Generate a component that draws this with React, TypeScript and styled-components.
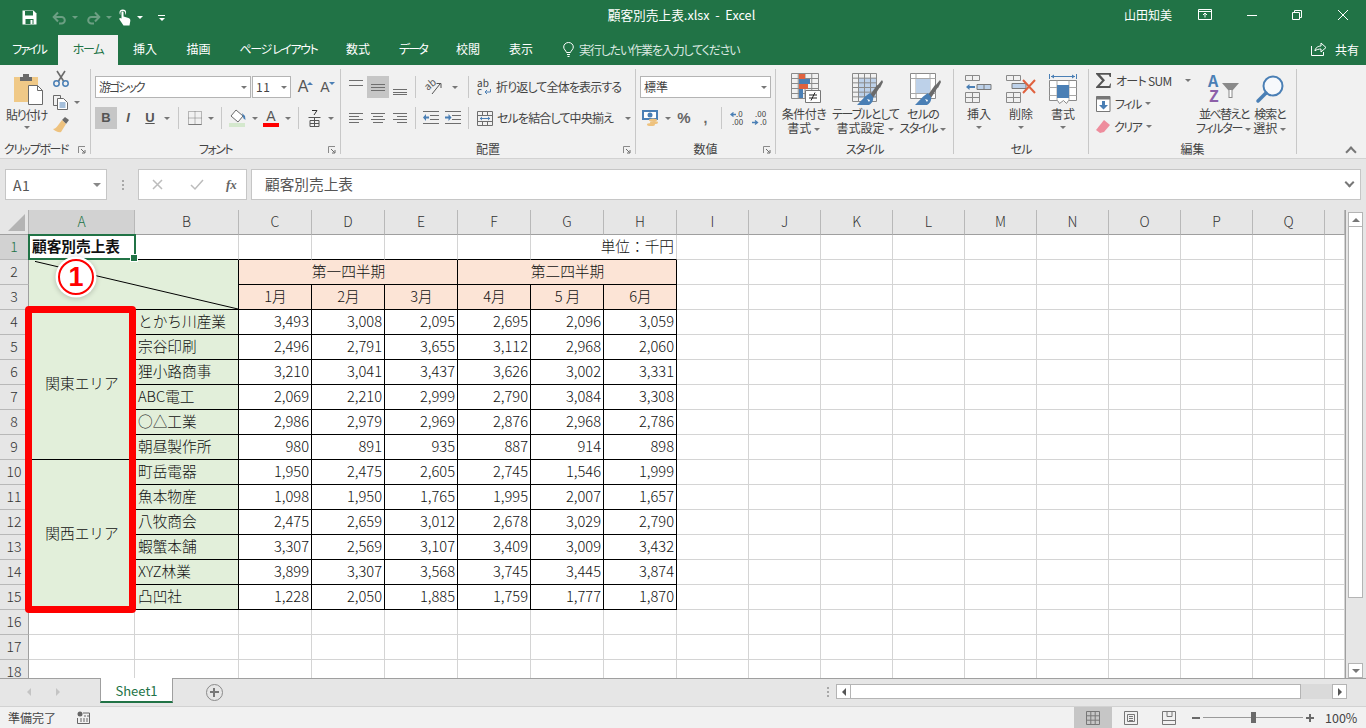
import React, { ReactNode } from 'react';
import styled, { createGlobalStyle } from 'styled-components';

const GlobalStyle = createGlobalStyle`
  html, body {
    margin: 0;
    padding: 0;
    overflow: hidden;
    background: #f1f1f1;
    font-family: "Noto Sans CJK JP", "Noto Sans", sans-serif;
  }
  * {
    box-sizing: border-box;
  }
`;

const GREEN = '#217346';
const GRAY = '#6a6a6a';
const BLUE = '#4a7fb5';

const Svg = styled.svg`
  display: block;
  flex: none;
  overflow: visible;
`;

// ---------- icons ----------

function SaveIcon() {
  return (
    <Svg width="15" height="15" viewBox="0 0 15 15">
      <path d="M0.5 0.5h11l3 3v11h-14z" fill="#fff" />
      <path d="M3 1h8v4.5H3zM3.5 9h8v5h-8z" fill={GREEN} />
      <path d="M8.5 10h2v4h-2z" fill="#fff" />
    </Svg>
  );
}

function UndoIcon({ flip }: { flip?: boolean }) {
  return (
    <Svg width="15" height="14" viewBox="0 0 15 14" style={flip ? { transform: 'scaleX(-1)' } : undefined}>
      <path d="M2 6h7.500a3.300 3.300 0 0 1 0 6.600H7M6 1.500L1.700 6 6 10.500" fill="none" stroke="#6c9f83" strokeWidth="2" />
    </Svg>
  );
}

function TouchIcon() {
  return (
    <Svg width="14" height="17" viewBox="0 0 14 17">
      <path d="M1.500 3.800a3.300 3.300 0 0 1 6.600 0c0 1-.3 1.700-.8 2.300V4a2.400 1.900 0 0 0-5 0v2.100c-.5-.6-.8-1.300-.8-2.300z" fill="#fff" />
      <path d="M3.500 3.500c0-1.200 2-1.200 2 0v4l5 1.500c1.500.5 2 1.500 1.800 3L11.500 16.500H5.500L1.500 10.500c-.8-1.300.8-2.200 2-1z" fill="#fff" />
    </Svg>
  );
}

function PasteIcon() {
  return (
    <Svg width="30" height="30" viewBox="0 0 30 30">
      <path d="M0 3h24v25H0z" fill="#f0c987" />
      <path d="M6 3h3V0h6v3h3v4H6z" fill={GRAY} />
      <path d="M14.500 11.500h9l5 5v14h-14z" fill="#fff" stroke={GRAY} />
      <path d="M23.500 11.500v5h5" fill="none" stroke={GRAY} />
    </Svg>
  );
}

function ScissorsIcon() {
  return (
    <Svg width="16" height="16" viewBox="0 0 16 16">
      <path d="M4 0l6.500 10M12 0L5.500 10" stroke={GRAY} strokeWidth="1.600" fill="none" />
      <circle cx="3.500" cy="12.500" r="2.700" fill="none" stroke={BLUE} strokeWidth="1.500" />
      <circle cx="12.500" cy="12.500" r="2.700" fill="none" stroke={BLUE} strokeWidth="1.500" />
    </Svg>
  );
}

function CopyIcon() {
  return (
    <Svg width="15" height="15" viewBox="0 0 15 15">
      <path d="M.5.500h7l0 3M.5.500v10h4" fill="none" stroke={GRAY} />
      <path d="M4.500 3.500h6l4 4v7h-10z" fill="#fff" stroke={GRAY} />
      <path d="M6.500 8h6M6.500 10h6M6.500 12h6" stroke={BLUE} />
    </Svg>
  );
}

function BrushIcon() {
  return (
    <Svg width="16" height="16" viewBox="0 0 16 16">
      <path d="M9 3l3-3 4 3-3 4z" fill={GRAY} />
      <path d="M9 3l4 4-5 8c-2 1-6-1-8-3 3 0 6-5 9-9z" fill="#eec27e" />
    </Svg>
  );
}

function BorderIcon() {
  return (
    <Svg width="14" height="14" viewBox="0 0 14 14">
      <path d="M.5.500h13v13H.5zM7 .5v13M.5 7h13" fill="none" stroke="#7a7a7a" strokeDasharray="1 1" />
      <path d="M.5 13.500h13" stroke="#7a7a7a" />
    </Svg>
  );
}

function FillIcon() {
  return (
    <Svg width="18" height="18" viewBox="0 0 18 18">
      <path d="M7 1l7 6-5 6-7-6z" fill="#fff" stroke={GRAY} />
      <path d="M13 4l3 3 .5 4-2-1.500z" fill={BLUE} />
      <path d="M0 14h16v4H0z" fill="#d4e8cd" />
    </Svg>
  );
}

function RubyIcon() {
  return (
    <Svg width="14" height="17" viewBox="0 0 14 17">
      <path d="M4 .5h5M9 .5L6 5" stroke="#333" fill="none" />
      <path d="M.5 7.500h12M2 10.500h9v6H2zM6.500 7.500v9M2 13.500h9" stroke="#555" fill="none" />
    </Svg>
  );
}

function AlignLines({ widths, rows, align }: { widths: number[]; rows: number[]; align: 'l' | 'c' | 'r' }) {
  const full = Math.max(...widths);
  return (
    <Svg width={full} height="15" viewBox={`0 0 ${full} 15`}>
      {rows.map((y, i) => {
        const w = widths[i % widths.length];
        const x = align === 'l' ? 0 : align === 'c' ? (full - w) / 2 : full - w;
        return <rect key={y} x={x} y={y} width={w} height="1" fill="#6e6e6e" />;
      })}
    </Svg>
  );
}

function OrientIcon() {
  return (
    <Svg width="18" height="18" viewBox="0 0 18 18">
      <text x="0" y="10" fontSize="10" fill="#555" transform="rotate(-40 5 9)">ab</text>
      <path d="M6 16L14 6M10.500 5.500H15V10" fill="none" stroke="#555" />
    </Svg>
  );
}

function IndentIcon({ flip }: { flip?: boolean }) {
  return (
    <Svg width="16" height="14" viewBox="0 0 16 14">
      <path d="M0 .5h16M7 4.500h9M7 8.500h9M0 12.500h16" stroke="#6e6e6e" />
      {flip ? (
        <path d="M0 5.500h3.500V3L6.500 6.500 3.500 10V7.500H0z" fill={BLUE} />
      ) : (
        <path d="M6 5.500H3V3L0 6.500 3 10V7.500h3z" fill={BLUE} />
      )}
    </Svg>
  );
}

function WrapIcon() {
  return (
    <Svg width="15" height="17" viewBox="0 0 15 17">
      <text x="0" y="8" fontSize="10" fill="#444">ab</text>
      <text x="0" y="16" fontSize="10" fill="#444">c</text>
      <path d="M13.500 10v3H8M10 11l-2 2 2 2" fill="none" stroke={BLUE} />
    </Svg>
  );
}

function MergeIcon() {
  return (
    <Svg width="16" height="15" viewBox="0 0 16 15">
      <path d="M.5.500h15v14H.5zM.5 4.500h15M.5 10.500h15M5.500.5v4M10.500.5v4M5.500 10.500v4M10.500 10.500v4" fill="none" stroke="#6e6e6e" />
      <path d="M3 7.500h10" stroke={BLUE} />
      <path d="M3 7.500l2-2v4zM13 7.500l-2-2v4z" fill={BLUE} />
    </Svg>
  );
}

function CurrencyIcon() {
  return (
    <Svg width="18" height="16" viewBox="0 0 18 16">
      <path d="M0 0h16v10H0z" fill={BLUE} />
      <path d="M2 2h12v6H2z" fill="#fff" />
      <circle cx="8" cy="5" r="2.500" fill={BLUE} />
      <ellipse cx="11" cy="10" rx="4" ry="1.500" fill="#eec27e" />
      <ellipse cx="12" cy="12.500" rx="4" ry="1.500" fill="#eec27e" />
      <ellipse cx="9" cy="14.500" rx="4" ry="1.500" fill="#eec27e" />
    </Svg>
  );
}

function DecimalIcon({ more }: { more?: boolean }) {
  return (
    <Svg width="16" height="15" viewBox="0 0 16 15">
      <text x={more ? 3 : 6} y="6" fontSize="8" fill="#444">{more ? '.00' : '.0'}</text>
      <text x={more ? 8 : 2} y="14" fontSize="8" fill="#444">{more ? '.0' : '.00'}</text>
      {more ? (
        <path d="M0 11.500h5M3 9.500l2.500 2-2.500 2" stroke={BLUE} fill="none" strokeWidth="1.300" />
      ) : (
        <path d="M6 3.500H1M3.500 1.500L1 3.500l2.500 2" stroke={BLUE} fill="none" strokeWidth="1.300" />
      )}
    </Svg>
  );
}

function TableLines({ x, y, w, h, cols, rows }: { x: number; y: number; w: number; h: number; cols: number; rows: number }) {
  const cw = w / cols;
  const rh = h / rows;
  let d = `M${x + 0.5} ${y + 0.5}h${w}v${h}h${-w}z`;
  for (let i = 1; i < cols; i++) d += `M${x + 0.5 + i * cw} ${y + 0.5}v${h}`;
  for (let i = 1; i < rows; i++) d += `M${x + 0.5} ${y + 0.5 + i * rh}h${w}`;
  return <path d={d} fill="none" stroke="#8a8a8a" />;
}

function CondFormatIcon() {
  return (
    <Svg width="32" height="32" viewBox="0 0 32 32">
      <TableLines x={0} y={0} w={27} h={25} cols={4} rows={5} />
      <path d="M8 1h6v5H8z" fill="#e0623f" />
      <path d="M8 6h11v5H8z" fill={BLUE} />
      <path d="M8 11h9v5H8z" fill="#e0623f" />
      <path d="M8 16h4v9H8z" fill={BLUE} />
      <path d="M14.500 17.500h15v12h-15z" fill="#fff" stroke="#777" />
      <path d="M18 22h8M18 25h8M24 19.500l-4 8" stroke="#222" fill="none" />
    </Svg>
  );
}

function BrushDiag() {
  return (
    <g transform="translate(-6 0)">
      <path d="M24 22l7-10 3 2-7 11z" fill={GRAY} />
      <path d="M36 7l-5 6 3 2 3-6z" fill={GRAY} />
      <path d="M24 20c-4 2-9 8-13 12h12c2-1 5-4 4-8z" fill={BLUE} />
      <path d="M21 26l3 1-1 2z" fill="#fff" />
    </g>
  );
}

function TableFormatIcon() {
  return (
    <Svg width="32" height="32" viewBox="0 0 32 32">
      <path d="M7 5h17v20H7z" fill="#bdd1e9" />
      <TableLines x={0} y={0} w={24} h={28} cols={4} rows={6} />
      <BrushDiag />
    </Svg>
  );
}

function CellStyleIcon() {
  return (
    <Svg width="32" height="32" viewBox="0 0 32 32">
      <path d="M.5.500h25v25H.5z" fill="#fff" stroke="#8a8a8a" />
      <path d="M.5 5.500h25M.5 20.500h25M6 .5v25M20 .5v25" stroke="#a8a8a8" />
      <path d="M6 6h14v14H6z" fill="#bdd1e9" />
      <BrushDiag />
    </Svg>
  );
}

function CellInsertIcon() {
  return (
    <Svg width="28" height="28" viewBox="0 0 28 28">
      <TableLines x={0} y={0} w={14} h={5} cols={2} rows={1} />
      <TableLines x={0} y={17} w={14} h={10} cols={2} rows={2} />
      <path d="M12 9.500h14v5H12z" fill="#bdd1e9" stroke="#7a7a7a" />
      <path d="M19 9.500v5" stroke="#7a7a7a" />
      <path d="M10 11H4.500V9L1 12l3.500 3v-2H10z" fill={BLUE} />
    </Svg>
  );
}

function CellDeleteIcon() {
  return (
    <Svg width="30" height="28" viewBox="0 0 30 28">
      <TableLines x={0} y={0} w={14} h={5} cols={2} rows={1} />
      <TableLines x={0} y={17} w={14} h={10} cols={2} rows={2} />
      <path d="M6 8.500h14v5H6z" fill="#bdd1e9" stroke="#7a7a7a" />
      <path d="M17 5l12 13M29 5L17 18" stroke="#e0623f" strokeWidth="2" />
    </Svg>
  );
}

function CellFormatIcon() {
  return (
    <Svg width="28" height="32" viewBox="0 0 28 32">
      <path d="M.5 1v5M27.500 1v5M2 3.500h24" stroke={BLUE} fill="none" />
      <path d="M2 3.500l3-2v4zM26 3.500l-3-2v4z" fill={BLUE} />
      <path d="M.5 7.500h27v20l-8 0-2 3-3-3-4 3-2-3H.5z" fill="#fff" stroke="#8a8a8a" />
      <path d="M.5 14.500h27M.5 22.500h27M8 7.500v20M20 7.500v20" stroke="#a8a8a8" />
      <path d="M8 12h12v13H8z" fill={BLUE} />
    </Svg>
  );
}

function SigmaIcon() {
  return (
    <Svg width="16" height="15" viewBox="0 0 16 15">
      <path d="M0 0h15v4h-1.200l-1-2.300H4l5 5.500-5.300 5.800h9.500l1-2.500H15L14.500 15H0v-1l6-6.500L0 1z" fill="#555" />
    </Svg>
  );
}

function FillDownIcon() {
  return (
    <Svg width="15" height="16" viewBox="0 0 15 16">
      <path d="M.5 .5h13.500v15H.5z" fill="#fff" stroke="#777" />
      <path d="M.5 .5h13.500v3H.5z" fill="#777" />
      <path d="M6 5h3v4h3l-4.500 4.500L3 9h3z" fill={BLUE} />
    </Svg>
  );
}

function EraserIcon() {
  return (
    <Svg width="14" height="13" viewBox="0 0 14 13">
      <path d="M8 0l6 5-6 7-4 1-4-3z" fill="#ee8d9d" />
    </Svg>
  );
}

function SortIcon() {
  return (
    <Svg width="30" height="30" viewBox="0 0 30 30">
      <text x="-1" y="13" fontSize="16" fontWeight="700" fill={BLUE}>A</text>
      <text x="0" y="28" fontSize="16" fontWeight="700" fill="#8c5fa8">Z</text>
      <path d="M13 9h17l-6.500 7.500V24h-4v-7.500z" fill="#8a8a8a" />
      <path d="M20.500 16h2v7h-2z" fill="#fff" />
    </Svg>
  );
}

function SearchIcon() {
  return (
    <Svg width="28" height="28" viewBox="0 0 28 28">
      <circle cx="17" cy="11" r="9.500" fill="#f7f9fc" stroke={BLUE} strokeWidth="2" />
      <path d="M10 18L2 26" stroke={BLUE} strokeWidth="3.500" strokeLinecap="round" />
    </Svg>
  );
}

function BulbIcon() {
  return (
    <Svg width="11" height="15" viewBox="0 0 11 15">
      <path d="M3.500 10.500C3 8.500 .7 7.500.7 5a4.800 4.500 0 0 1 9.600 0c0 2.500-2.300 3.500-2.800 5.500z" fill="none" stroke="#fff" />
      <path d="M4 12.500h3M4.500 14.500h2" stroke="#fff" />
    </Svg>
  );
}

function ShareIcon() {
  return (
    <Svg width="16" height="14" viewBox="0 0 16 14">
      <path d="M.5 4v9.500h12V10M4 9c0-3 3-5 6-5V1l5 4.500L10 10V7C8 7 5 7.500 4 9z" fill="none" stroke="#fff" />
    </Svg>
  );
}

function LauncherIcon() {
  return (
    <Svg width="8" height="8" viewBox="0 0 8 8">
      <path d="M.5 7V.5H7" fill="none" stroke="#8a8a8a" />
      <path d="M3 3l3.500 3.500M7 4v3H4" fill="none" stroke="#6a6a6a" />
    </Svg>
  );
}

// ---------- title bar and tabs ----------

const Window = styled.div`
  width: 1366px;
  height: 728px;
  display: flex;
  flex-direction: column;
  overflow: hidden;
  background: #e6e6e6;
`;

const TitleBar = styled.header`
  height: 35px;
  flex: none;
  display: grid;
  grid-template-columns: 1fr auto 1fr;
  align-items: center;
  background: ${GREEN};
  color: #fff;
  font-size: 12px;
`;

const QuickAccess = styled.div`
  display: flex;
  align-items: center;
  padding-left: 22px;
`;

const QuickItem = styled.span<{ $w: number }>`
  width: ${(p) => p.$w}px;
  display: flex;
  align-items: center;
`;

const WhiteCaret = styled.span<{ $dim?: boolean }>`
  width: 0;
  height: 0;
  border-left: 3.5px solid transparent;
  border-right: 3.5px solid transparent;
  border-top: 3.5px solid ${(p) => (p.$dim ? '#6c9f83' : '#fff')};
`;

const CustomizeMark = styled.span`
  width: 7px;
  height: 7px;
  border-top: 1px solid #fff;
  display: flex;
  justify-content: center;
  margin-top: 2px;
  &::after {
    content: '';
    margin-top: 2px;
    border-left: 3.5px solid transparent;
    border-right: 3.5px solid transparent;
    border-top: 3.5px solid #fff;
  }
`;

const DocTitle = styled.div`
  font-size: 12.7px;
  white-space: pre;
  padding: 0 3px 6px 0;
`;

const WindowControls = styled.div`
  display: flex;
  align-items: center;
  justify-content: flex-end;
  padding: 0 18px 6px 0;
`;

const UserName = styled.span`
  font-size: 12px;
  margin-right: 26px;
`;

const ControlSlot = styled.span<{ $w: number }>`
  width: ${(p) => p.$w}px;
  display: flex;
`;

const TabBar = styled.nav`
  height: 30px;
  flex: none;
  display: flex;
  align-items: stretch;
  background: ${GREEN};
  color: #fff;
  font-size: 12px;
  font-feature-settings: 'palt';
`;

const Tab = styled.div<{ $w: number; $ls?: number; $active?: boolean }>`
  width: ${(p) => p.$w}px;
  display: flex;
  align-items: center;
  justify-content: center;
  padding-bottom: 3px;
  letter-spacing: ${(p) => p.$ls ?? 0}px;
  background: ${(p) => (p.$active ? '#f1f1f1' : 'transparent')};
  color: ${(p) => (p.$active ? GREEN : '#fff')};
`;

const TellMe = styled.div`
  display: flex;
  align-items: center;
  gap: 5px;
  padding: 0 0 2px 15px;
  color: #dce9e1;
  letter-spacing: -1.150px;
`;

const ShareBox = styled.div`
  margin-left: auto;
  display: flex;
  align-items: center;
  gap: 8px;
  padding: 0 7px 2px 0;
`;

// ---------- ribbon ----------

const Ribbon = styled.div`
  height: 94px;
  flex: none;
  display: flex;
  padding-top: 4px;
  background: #f1f1f1;
  border-bottom: 1px solid #d2d2d2;
  color: #444;
  font-size: 12px;
  font-feature-settings: 'palt';
  line-height: 14px;
`;

const Squeeze = styled.span<{ $ls: number }>`
  letter-spacing: ${(p) => p.$ls}px;
  white-space: nowrap;
`;

const Group = styled.section<{ $w: number }>`
  width: ${(p) => p.$w}px;
  height: 85px;
  flex: none;
  display: grid;
  grid-template-rows: 72px 16px;
  border-right: 1px solid #c8c8c8;
  position: relative;
`;

const GroupLabel = styled.div<{ $ls: number; $shift: number }>`
  text-align: center;
  line-height: 16px;
  color: #444;
  letter-spacing: ${(p) => p.$ls}px;
  padding-right: ${(p) => p.$shift}px;
`;

const Launcher = styled.span`
  position: absolute;
  right: 4px;
  bottom: 0;
`;

const Stack = styled.div<{ $pad: number }>`
  display: flex;
  flex-direction: column;
  gap: 9px;
  padding: 7px 0 0 ${(p) => p.$pad}px;
`;

const Row = styled.div`
  height: 22px;
  display: flex;
  align-items: center;
`;

const Tool = styled.span<{ $w: number; $on?: boolean }>`
  width: ${(p) => p.$w}px;
  height: 22px;
  flex: none;
  display: flex;
  align-items: center;
  justify-content: center;
  background: ${(p) => (p.$on ? '#c6c6c6' : 'transparent')};
`;

const Caret = styled.span<{ $w?: number }>`
  width: ${(p) => p.$w ?? 7}px;
  flex: none;
  display: inline-flex;
  justify-content: center;
  vertical-align: middle;
  &::after {
    content: '';
    border-left: 3.5px solid transparent;
    border-right: 3.5px solid transparent;
    border-top: 3.5px solid #777;
  }
`;

const Sep = styled.span<{ $m?: number }>`
  width: 1px;
  height: 22px;
  flex: none;
  margin: 0 ${(p) => p.$m ?? 5}px;
  background: #c8c8c8;
`;

const SelectBox = styled.div<{ $w: number; $gapLeft?: number }>`
  width: ${(p) => p.$w}px;
  height: 22px;
  flex: none;
  display: flex;
  align-items: center;
  justify-content: space-between;
  margin-left: ${(p) => p.$gapLeft ?? 0}px;
  padding: 0 3px;
  background: #fff;
  border: 1px solid #b4b4b4;
  color: #444;
`;

const SizeRow = styled.div`
  display: flex;
  margin-left: 1px;
`;

const SizeUp = styled.span<{ $shrink?: boolean }>`
  position: relative;
  font-size: ${(p) => (p.$shrink ? 14 : 16)}px;
  color: #555;
  font-family: "Liberation Sans", sans-serif;
  &::after {
    content: '';
    position: absolute;
    top: 2px;
    right: -5px;
    border-left: 3px solid transparent;
    border-right: 3px solid transparent;
    ${(p) => (p.$shrink ? `border-top: 3px solid ${BLUE};` : `border-bottom: 3px solid ${BLUE};`)}
  }
`;

const FormatLetter = styled.span<{ $italic?: boolean; $under?: boolean }>`
  font-family: "Liberation Sans", sans-serif;
  font-size: 13px;
  font-weight: 700;
  color: #555;
  font-style: ${(p) => (p.$italic ? 'italic' : 'normal')};
  text-decoration: ${(p) => (p.$under ? 'underline' : 'none')};
`;

const ColorLetter = styled.span`
  display: flex;
  flex-direction: column;
  align-items: center;
  font-family: "Liberation Sans", sans-serif;
  font-size: 14px;
  line-height: 14px;
  color: #555;
  &::after {
    content: '';
    width: 16px;
    height: 4px;
    background: #ff0000;
  }
`;

const TextTool = styled.div<{ $w: number; $gap: number }>`
  width: ${(p) => p.$w}px;
  display: flex;
  align-items: center;
  gap: ${(p) => p.$gap}px;
  padding-left: 4px;
  white-space: nowrap;
`;

const NumberMark = styled.span<{ $size: number }>`
  font-family: "Liberation Sans", sans-serif;
  font-size: ${(p) => p.$size}px;
  font-weight: 700;
  color: #666;
`;

const ClipGrid = styled.div`
  display: grid;
  grid-template-columns: 53px 1fr;
`;

const PasteButton = styled.div`
  display: flex;
  flex-direction: column;
  align-items: center;
  padding-top: 5px;
  gap: 4px;
  white-space: nowrap;
`;

const PasteArt = styled.span`
  padding-left: 4px;
`;

const ClipColumn = styled.div`
  display: flex;
  flex-direction: column;
  gap: 7px;
  padding-top: 2px;
`;

const ClipItem = styled.div`
  display: flex;
  align-items: center;
  gap: 3px;
  height: 16px;
`;

const BigRow = styled.div<{ $pad?: number }>`
  display: flex;
  padding-left: ${(p) => p.$pad ?? 0}px;
`;

const BigButton = styled.div<{ $w: number }>`
  width: ${(p) => p.$w}px;
  flex: none;
  display: grid;
  grid-template-rows: 38px auto;
  justify-items: center;
  align-items: end;
`;

const BigIconSlot = styled.div<{ $shift?: number }>`
  height: 38px;
  display: flex;
  align-items: center;
  padding: 1px 0 0 ${(p) => p.$shift ?? 0}px;
`;

const BigText = styled.div`
  text-align: center;
  white-space: nowrap;
  line-height: 14px;
  align-self: start;
`;

const CaretBlock = styled.div`
  display: flex;
  justify-content: center;
  padding-top: 5px;
`;

const EditColumn = styled.div`
  width: 107px;
  flex: none;
  display: flex;
  flex-direction: column;
  padding-left: 7px;
`;

const EditItem = styled.div`
  height: 23px;
  display: flex;
  align-items: center;
  gap: 4px;
  white-space: nowrap;
`;

const Collapse = styled.span`
  align-self: flex-end;
  margin-left: auto;
  margin-right: 11px;
  margin-bottom: 2px;
  width: 8px;
  height: 8px;
  border-left: 2px solid #777;
  border-top: 2px solid #777;
  transform: rotate(45deg);
`;

// ---------- formula bar ----------

const FormulaBar = styled.div`
  height: 51px;
  flex: none;
  display: flex;
  align-items: flex-start;
  padding: 10px 5px 0;
  background: #e6e6e6;
  color: #555;
`;

const NameBox = styled.div`
  width: 102px;
  height: 31px;
  display: flex;
  align-items: center;
  justify-content: space-between;
  padding: 0 5px 0 7px;
  background: #fff;
  border: 1px solid #c6c6c6;
  font-size: 14px;
  letter-spacing: 0.5px;
`;

const GripDots = styled.span`
  width: 31px;
  height: 31px;
  flex: none;
  display: flex;
  flex-direction: column;
  align-items: center;
  justify-content: center;
  gap: 2px;
  & > i {
    width: 2px;
    height: 2px;
    background: #a8a8a8;
  }
`;

const FnBox = styled.div`
  width: 109px;
  height: 31px;
  flex: none;
  display: grid;
  grid-template-columns: 38px 36px 1fr;
  align-items: center;
  padding-left: 13px;
  background: #fff;
  border: 1px solid #c6c6c6;
`;

const FxMark = styled.span`
  font-family: "Liberation Serif", serif;
  font-style: italic;
  font-weight: 700;
  font-size: 13px;
  color: #666;
`;

const FormulaInput = styled.div`
  flex: 1;
  margin-left: 4px;
  height: 31px;
  display: flex;
  align-items: center;
  justify-content: space-between;
  padding: 0 5px 3px 13px;
  background: #fff;
  border: 1px solid #c6c6c6;
  font-size: 14.67px;
  color: #555;
`;

const ChevronDown = styled.span`
  width: 7px;
  height: 7px;
  margin: -1px 2px 0 0;
  border-right: 2px solid #777;
  border-bottom: 2px solid #777;
  transform: rotate(45deg);
`;

// ---------- sheet ----------

const SheetArea = styled.div`
  height: 468px;
  flex: none;
  display: flex;
  overflow: hidden;
`;

const GridClip = styled.div`
  width: 1346px;
  flex: none;
  overflow: hidden;
  border-right: 1px solid #9f9f9f;
`;

const Grid = styled.div`
  position: relative;
  display: grid;
  grid-template-columns: 29px 106px 104px repeat(6, 73px) repeat(9, 72px) 20px;
  grid-auto-rows: 25px;
  background: #fff;
  color: #111;
  font-size: 14.67px;
  font-weight: 300;
`;

const Corner = styled.div`
  background: #e6e6e6;
  border-right: 1px solid #b0b0b0;
  border-bottom: 1px solid #9f9f9f;
  display: flex;
  align-items: flex-end;
  justify-content: flex-end;
  padding: 0 3px 3px 0;
  &::after {
    content: '';
    border-left: 17px solid transparent;
    border-bottom: 17px solid #b4b4b4;
  }
`;

const ColHead = styled.div<{ $on?: boolean }>`
  display: flex;
  align-items: center;
  justify-content: center;
  padding-bottom: 2px;
  background: ${(p) => (p.$on ? '#d2d2d2' : '#e6e6e6')};
  color: ${(p) => (p.$on ? GREEN : '#333')};
  border-right: 1px solid #b8b8b8;
  border-bottom: 1px solid #9f9f9f;
  font-size: 14px;
`;

const RowHead = styled.div<{ $on?: boolean }>`
  display: flex;
  align-items: center;
  justify-content: center;
  padding-bottom: 3px;
  background: ${(p) => (p.$on ? '#d2d2d2' : '#e6e6e6')};
  color: ${(p) => (p.$on ? GREEN : '#333')};
  border-right: 1px solid #9f9f9f;
  border-bottom: 1px solid #b8b8b8;
  font-size: 14px;
`;

const Cell = styled.div<{
  $bg?: string;
  $black?: boolean;
  $under?: boolean;
  $cols?: number;
  $rows?: number;
  $align?: 'left' | 'center' | 'right';
  $bold?: boolean;
}>`
  grid-column: span ${(p) => p.$cols ?? 1};
  grid-row: span ${(p) => p.$rows ?? 1};
  display: flex;
  align-items: center;
  justify-content: ${(p) => (p.$align === 'center' ? 'center' : p.$align === 'right' ? 'flex-end' : 'flex-start')};
  padding: 0 2px 4px 3px;
  background: ${(p) => p.$bg ?? '#fff'};
  border-right: 1px solid ${(p) => (p.$black ? '#000' : '#d4d4d4')};
  border-bottom: 1px solid ${(p) => (p.$black || p.$under ? '#000' : '#d4d4d4')};
  font-weight: ${(p) => (p.$bold ? 700 : 300)};
  white-space: nowrap;
  position: relative;
  overflow: hidden;
`;

const Diagonal = styled.svg`
  position: absolute;
  inset: 0;
  width: 100%;
  height: 100%;
`;

const Selection = styled.div`
  position: absolute;
  left: 28px;
  top: 24px;
  width: 108px;
  height: 26px;
  border: 2px solid ${GREEN};
  pointer-events: none;
  &::after {
    content: '';
    position: absolute;
    right: -4px;
    bottom: -4px;
    width: 6px;
    height: 6px;
    background: ${GREEN};
    border: 1px solid #fff;
  }
`;

const RedFrame = styled.div`
  position: absolute;
  left: 25px;
  top: 96px;
  width: 111px;
  height: 307px;
  border: 7px solid #ff0000;
  border-radius: 4px;
`;

const StepBadge = styled.div`
  position: absolute;
  left: 58px;
  top: 49px;
  width: 36px;
  height: 36px;
  display: flex;
  align-items: center;
  justify-content: center;
  border-radius: 50%;
  background: #fff;
  border: 2px solid #ff0000;
  box-shadow: 0 0 0 2.5px #fff, 0 1px 5px 3px rgba(0, 0, 0, 0.18);
  color: #ff0000;
  font-family: "Liberation Sans", sans-serif;
  font-size: 27px;
  font-weight: 700;
`;

const VScroll = styled.div`
  flex: 1;
  display: flex;
  flex-direction: column;
  padding: 2px 3px 0 2px;
  background: #e6e6e6;
`;

const ScrollBtn = styled.div`
  flex: none;
  width: 15px;
  height: 15px;
  display: flex;
  align-items: center;
  justify-content: center;
  background: #fff;
  border: 1px solid #b4b4b4;
`;

const Tri = styled.span<{ $dir: 'up' | 'down' | 'left' | 'right'; $color?: string }>`
  width: 0;
  height: 0;
  ${(p) => {
    const c = p.$color ?? '#777';
    if (p.$dir === 'up') return `border-left:4px solid transparent;border-right:4px solid transparent;border-bottom:4px solid ${c};`;
    if (p.$dir === 'down') return `border-left:4px solid transparent;border-right:4px solid transparent;border-top:4px solid ${c};`;
    if (p.$dir === 'left') return `border-top:4px solid transparent;border-bottom:4px solid transparent;border-right:4px solid ${c};`;
    return `border-top:4px solid transparent;border-bottom:4px solid transparent;border-left:4px solid ${c};`;
  }}
`;

const VThumb = styled.div`
  width: 15px;
  height: 371px;
  flex: none;
  background: #fff;
  border: 1px solid #b4b4b4;
  border-top: 0;
`;

const VTrack = styled.div`
  flex: 1;
`;

// ---------- sheet tabs and status ----------

const SheetBar = styled.div`
  height: 28px;
  flex: none;
  display: flex;
  background: #e6e6e6;
  border-top: 1px solid #9f9f9f;
`;

const TabNav = styled.div`
  width: 100px;
  flex: none;
  display: flex;
  align-items: center;
  gap: 25px;
  padding: 0 0 2px 27px;
`;

const SheetTab = styled.div`
  width: 73px;
  height: 25px;
  margin-top: -1px;
  flex: none;
  display: flex;
  align-items: center;
  justify-content: center;
  padding-top: 2px;
  background: #fff;
  color: ${GREEN};
  font-size: 13px;
  border-left: 1px solid #9f9f9f;
  border-right: 1px solid #9f9f9f;
  border-bottom: 2px solid ${GREEN};
`;

const AddSheet = styled.div`
  width: 17px;
  height: 17px;
  margin: 5px 0 0 33px;
  flex: none;
  border-radius: 50%;
  border: 1.500px solid #8a8a8a;
  position: relative;
  &::before,
  &::after {
    content: '';
    position: absolute;
    background: #777;
  }
  &::before {
    left: 3px;
    right: 3px;
    top: 6px;
    height: 2px;
  }
  &::after {
    top: 3px;
    bottom: 3px;
    left: 6px;
    width: 2px;
  }
`;

const HScrollWrap = styled.div`
  margin-left: auto;
  display: flex;
  align-items: center;
  padding: 0 19px 2px 0;
`;

const GripH = styled(GripDots)`
  width: 16px;
  height: 16px;
`;

const HThumb = styled.div`
  width: 450px;
  height: 15px;
  flex: none;
  background: #fff;
  border: 1px solid #b4b4b4;
  border-left: 0;
`;

const HTrack = styled.div`
  width: 31px;
  height: 15px;
  flex: none;
  background: #dadada;
`;

const StatusBar = styled.footer`
  height: 22px;
  flex: none;
  display: flex;
  align-items: center;
  padding-left: 8px;
  background: #f1f1f1;
  border-top: 1px solid #d2d2d2;
  color: #444;
  font-size: 12px;
`;

const StatusIcon = styled.span`
  margin-left: 21px;
  display: flex;
`;

const ViewGroup = styled.div`
  margin-left: auto;
  height: 100%;
  display: flex;
  align-items: stretch;
`;

const ViewBtn = styled.span<{ $on?: boolean }>`
  width: 38px;
  display: flex;
  align-items: center;
  justify-content: center;
  background: ${(p) => (p.$on ? '#c6c6c6' : 'transparent')};
`;

const ZoomBox = styled.div`
  display: flex;
  align-items: center;
  padding-left: 4px;
  gap: 3px;
`;

const ZoomSign = styled.span`
  width: 8px;
  height: 8px;
  display: block;
  position: relative;
  &::before {
    content: '';
    position: absolute;
    left: 0;
    right: 0;
    top: 3px;
    height: 2px;
    background: #6a6a6a;
  }
`;

const ZoomPlus = styled(ZoomSign)`
  &::after {
    content: '';
    position: absolute;
    top: 0;
    bottom: 0;
    left: 3px;
    width: 2px;
    background: #6a6a6a;
  }
`;

const ZoomTrack = styled.div`
  width: 100px;
  height: 1px;
  background: #9a9a9a;
  position: relative;
`;

const ZoomThumb = styled.span`
  position: absolute;
  left: 48px;
  top: -5px;
  width: 5px;
  height: 11px;
  background: #6a6a6a;
`;

const ZoomValue = styled.span`
  width: 52px;
  padding-left: 11px;
  font-size: 12.5px;
  align-self: center;
`;

// ---------- data ----------

const columns = ['A', 'B', 'C', 'D', 'E', 'F', 'G', 'H', 'I', 'J', 'K', 'L', 'M', 'N', 'O', 'P', 'Q', ''];
const RIGHT_BLANKS = 10;
const GREEN_BG = '#e2efda';
const PEACH_BG = '#fce4d6';
const months = ['1月', '2月', '3月', '4月', '5 月', '6月'];

const customers: { r: number; name: string; v: string[] }[] = [
  { r: 4, name: 'とかち川産業', v: ['3,493', '3,008', '2,095', '2,695', '2,096', '3,059'] },
  { r: 5, name: '宗谷印刷', v: ['2,496', '2,791', '3,655', '3,112', '2,968', '2,060'] },
  { r: 6, name: '狸小路商事', v: ['3,210', '3,041', '3,437', '3,626', '3,002', '3,331'] },
  { r: 7, name: 'ABC電工', v: ['2,069', '2,210', '2,999', '2,790', '3,084', '3,308'] },
  { r: 8, name: '○△工業', v: ['2,986', '2,979', '2,969', '2,876', '2,968', '2,786'] },
  { r: 9, name: '朝昼製作所', v: ['980', '891', '935', '887', '914', '898'] },
  { r: 10, name: '町岳電器', v: ['1,950', '2,475', '2,605', '2,745', '1,546', '1,999'] },
  { r: 11, name: '魚本物産', v: ['1,098', '1,950', '1,765', '1,995', '2,007', '1,657'] },
  { r: 12, name: '八牧商会', v: ['2,475', '2,659', '3,012', '2,678', '3,029', '2,790'] },
  { r: 13, name: '蝦蟹本舗', v: ['3,307', '2,569', '3,107', '3,409', '3,009', '3,432'] },
  { r: 14, name: 'XYZ林業', v: ['3,899', '3,307', '3,568', '3,745', '3,445', '3,874'] },
  { r: 15, name: '凸凹社', v: ['1,228', '2,050', '1,885', '1,759', '1,777', '1,870'] },
];

const tabs = [
  { name: 'ファイル', w: 58, ls: -2 },
  { name: 'ホーム', w: 60, ls: -1.200, active: true },
  { name: '挿入', w: 54 },
  { name: '描画', w: 53 },
  { name: 'ページ レイアウト', w: 107, ls: -1.400 },
  { name: '数式', w: 52 },
  { name: 'データ', w: 58, ls: -1.700 },
  { name: '校閲', w: 52 },
  { name: '表示', w: 54 },
];

function Blanks({ count }: { count: number }) {
  return (
    <>
      {Array.from({ length: count }).map((_, i) => (
        <Cell key={i} />
      ))}
    </>
  );
}

function RibbonGroup({
  w,
  label,
  ls = 0,
  shift = 0,
  launcher,
  children,
}: {
  w: number;
  label: string;
  ls?: number;
  shift?: number;
  launcher?: boolean;
  children: ReactNode;
}) {
  return (
    <Group $w={w}>
      <div>{children}</div>
      <GroupLabel $ls={ls} $shift={shift}>{label}</GroupLabel>
      {launcher && (
        <Launcher>
          <LauncherIcon />
        </Launcher>
      )}
    </Group>
  );
}

function Big({
  w,
  icon,
  shift,
  lines,
  caretBelow,
}: {
  w: number;
  icon: ReactNode;
  shift?: number;
  lines: ReactNode[];
  caretBelow?: boolean;
}) {
  return (
    <BigButton $w={w}>
      <BigIconSlot $shift={shift}>{icon}</BigIconSlot>
      <BigText>
        {lines.map((l, i) => (
          <div key={i}>{l}</div>
        ))}
        {caretBelow && (
          <CaretBlock>
            <Caret />
          </CaretBlock>
        )}
      </BigText>
    </BigButton>
  );
}

export default function App() {
  return (
    <Window>
      <GlobalStyle />
      <TitleBar>
        <QuickAccess>
          <QuickItem $w={30}><SaveIcon /></QuickItem>
          <QuickItem $w={20}><UndoIcon /></QuickItem>
          <QuickItem $w={14}><WhiteCaret $dim /></QuickItem>
          <QuickItem $w={20}><UndoIcon flip /></QuickItem>
          <QuickItem $w={12}><WhiteCaret $dim /></QuickItem>
          <QuickItem $w={19}><TouchIcon /></QuickItem>
          <QuickItem $w={21}><WhiteCaret /></QuickItem>
          <CustomizeMark />
        </QuickAccess>
        <DocTitle>{'顧客別売上表.xlsx  -  Excel'}</DocTitle>
        <WindowControls>
          <UserName>山田知美</UserName>
          <ControlSlot $w={49}>
            <Svg width="14" height="11" viewBox="0 0 14 11">
              <path d="M.5.500h13v10H.5zM.5 2.500h13M7 8.500V4.500M5 6l2-2 2 2" fill="none" stroke="#fff" />
            </Svg>
          </ControlSlot>
          <ControlSlot $w={45}>
            <Svg width="10" height="10" viewBox="0 0 10 10"><path d="M0 5.500h10" stroke="#fff" /></Svg>
          </ControlSlot>
          <ControlSlot $w={46}>
            <Svg width="10" height="10" viewBox="0 0 10 10">
              <path d="M.5 2.500h7v7h-7zM2.500 2.500v-2h7v7h-2" fill="none" stroke="#fff" />
            </Svg>
          </ControlSlot>
          <ControlSlot $w={10}>
            <Svg width="10" height="10" viewBox="0 0 10 10"><path d="M0 0l10 10M10 0L0 10" stroke="#fff" /></Svg>
          </ControlSlot>
        </WindowControls>
      </TitleBar>

      <TabBar>
        {tabs.map((t) => (
          <Tab key={t.name} $w={t.w} $ls={t.ls} $active={t.active}>{t.name}</Tab>
        ))}
        <TellMe>
          <BulbIcon />
          <span>実行したい作業を入力してください</span>
        </TellMe>
        <ShareBox>
          <ShareIcon />
          <span>共有</span>
        </ShareBox>
      </TabBar>

      <Ribbon>
        <RibbonGroup w={91} label="クリップボード" ls={-1.400} shift={18} launcher>
          <ClipGrid>
            <PasteButton>
              <PasteArt><PasteIcon /></PasteArt>
              <Squeeze $ls={-1.200}>貼り付け</Squeeze>
              <Caret />
            </PasteButton>
            <ClipColumn>
              <ClipItem><ScissorsIcon /></ClipItem>
              <ClipItem><CopyIcon /><Caret $w={12} /></ClipItem>
              <ClipItem><BrushIcon /></ClipItem>
            </ClipColumn>
          </ClipGrid>
        </RibbonGroup>

        <RibbonGroup w={250} label="フォント" ls={-1.500} launcher>
          <Stack $pad={4}>
            <Row>
              <SelectBox $w={156}><Squeeze $ls={-2}>游ゴシック</Squeeze><Caret /></SelectBox>
              <SelectBox $w={39} $gapLeft={1}><Squeeze $ls={0.5}>11</Squeeze><Caret /></SelectBox>
              <SizeRow>
                <Tool $w={22}><SizeUp>A</SizeUp></Tool>
                <Tool $w={22}><SizeUp $shrink>A</SizeUp></Tool>
              </SizeRow>
            </Row>
            <Row>
              <Tool $w={22} $on><FormatLetter>B</FormatLetter></Tool>
              <Tool $w={22}><FormatLetter $italic>I</FormatLetter></Tool>
              <Tool $w={22}><FormatLetter $under>U</FormatLetter></Tool>
              <Caret $w={12} />
              <Sep />
              <Tool $w={21}><BorderIcon /></Tool>
              <Caret $w={11} />
              <Sep />
              <Tool $w={22}><FillIcon /></Tool>
              <Caret $w={11} />
              <Tool $w={22}><ColorLetter>A</ColorLetter></Tool>
              <Caret $w={11} />
              <Sep />
              <Tool $w={21}><RubyIcon /></Tool>
              <Caret $w={12} />
            </Row>
          </Stack>
        </RibbonGroup>

        <RibbonGroup w={295} label="配置" launcher>
          <Stack $pad={4}>
            <Row>
              <Tool $w={22}><AlignLines widths={[14]} rows={[0, 5]} align="l" /></Tool>
              <Tool $w={22} $on><AlignLines widths={[14]} rows={[4, 7, 10]} align="l" /></Tool>
              <Tool $w={22}><AlignLines widths={[14]} rows={[9, 12, 14]} align="l" /></Tool>
              <Sep $m={4} />
              <Tool $w={30}><OrientIcon /></Tool>
              <Caret $w={10} />
              <Tool $w={4} />
              <Sep $m={4} />
              <TextTool $w={160} $gap={4}>
                <WrapIcon />
                <Squeeze $ls={-0.850}>折り返して全体を表示する</Squeeze>
              </TextTool>
            </Row>
            <Row>
              <Tool $w={22}><AlignLines widths={[14, 10, 14, 10]} rows={[2, 5, 8, 11]} align="l" /></Tool>
              <Tool $w={22}><AlignLines widths={[14, 10, 14, 10]} rows={[2, 5, 8, 11]} align="c" /></Tool>
              <Tool $w={22}><AlignLines widths={[14, 10, 14, 10]} rows={[2, 5, 8, 11]} align="r" /></Tool>
              <Sep $m={4} />
              <Tool $w={22}><IndentIcon /></Tool>
              <Tool $w={22}><IndentIcon flip /></Tool>
              <Sep $m={4} />
              <TextTool $w={160} $gap={4}>
                <MergeIcon />
                <Squeeze $ls={-0.850}>セルを結合して中央揃え</Squeeze>
                <Caret $w={22} />
              </TextTool>
            </Row>
          </Stack>
        </RibbonGroup>

        <RibbonGroup w={140} label="数値" launcher>
          <Stack $pad={4}>
            <Row>
              <SelectBox $w={131}><span>標準</span><Caret /></SelectBox>
            </Row>
            <Row>
              <Tool $w={22}><CurrencyIcon /></Tool>
              <Caret $w={11} />
              <Tool $w={22}><NumberMark $size={15}>%</NumberMark></Tool>
              <Tool $w={21}><NumberMark $size={14}>,</NumberMark></Tool>
              <Sep />
              <Tool $w={22}><DecimalIcon /></Tool>
              <Tool $w={21}><DecimalIcon more /></Tool>
            </Row>
          </Stack>
        </RibbonGroup>

        <RibbonGroup w={178} label="スタイル" ls={-1.500}>
          <BigRow>
            <Big w={56} shift={6} icon={<CondFormatIcon />} lines={[<Squeeze $ls={-0.5}>条件付き</Squeeze>, <>書式 <Caret /></>]} />
            <Big w={62} shift={6} icon={<TableFormatIcon />} lines={[<Squeeze $ls={-1.200}>テーブルとして</Squeeze>, <>書式設定 <Caret /></>]} />
            <Big w={58} shift={6} icon={<CellStyleIcon />} lines={[<Squeeze $ls={-0.8}>セルの</Squeeze>, <><Squeeze $ls={-1.400}>スタイル</Squeeze> <Caret /></>]} />
          </BigRow>
        </RibbonGroup>

        <RibbonGroup w={135} label="セル" ls={-1}>
          <BigRow $pad={4}>
            <Big w={42} icon={<CellInsertIcon />} lines={['挿入']} caretBelow />
            <Big w={42} icon={<CellDeleteIcon />} lines={['削除']} caretBelow />
            <Big w={42} icon={<CellFormatIcon />} lines={['書式']} caretBelow />
          </BigRow>
        </RibbonGroup>

        <RibbonGroup w={208} label="編集">
          <BigRow>
            <EditColumn>
              <EditItem><SigmaIcon /><Squeeze $ls={-0.7}>オート SUM</Squeeze><Caret $w={26} /></EditItem>
              <EditItem><FillDownIcon /><Squeeze $ls={-1.500}>フィル</Squeeze><Caret /></EditItem>
              <EditItem><EraserIcon /><Squeeze $ls={-1.500}>クリア</Squeeze><Caret /></EditItem>
            </EditColumn>
            <Big w={52} icon={<SortIcon />} lines={[<Squeeze $ls={-1.600}>並べ替えと</Squeeze>, <><Squeeze $ls={-1.300}>フィルター</Squeeze> <Caret /></>]} />
            <Big w={44} icon={<SearchIcon />} lines={[<Squeeze $ls={-1}>検索と</Squeeze>, <>選択 <Caret /></>]} />
          </BigRow>
        </RibbonGroup>

        <Collapse />
      </Ribbon>

      <FormulaBar>
        <NameBox><span>A1</span><Tri $dir="down" $color="#888" /></NameBox>
        <GripDots><i /><i /><i /></GripDots>
        <FnBox>
          <Svg width="11" height="11" viewBox="0 0 11 11"><path d="M1 1l9 9M10 1l-9 9" stroke="#bcbcbc" strokeWidth="1.500" /></Svg>
          <Svg width="14" height="11" viewBox="0 0 14 11"><path d="M1 6l4 4 8-9" fill="none" stroke="#bcbcbc" strokeWidth="1.500" /></Svg>
          <FxMark>fx</FxMark>
        </FnBox>
        <FormulaInput>
          <span>顧客別売上表</span>
          <ChevronDown />
        </FormulaInput>
      </FormulaBar>

      <SheetArea>
        <GridClip>
          <Grid>
            <Corner />
            {columns.map((c, i) => (
              <ColHead key={i} $on={c === 'A'}>{c}</ColHead>
            ))}

            <RowHead $on>1</RowHead>
            <Cell $bold $under>顧客別売上表</Cell>
            <Cell $under />
            <Cell $under />
            <Cell $under />
            <Cell $under />
            <Cell $under />
            <Cell $under $cols={2} $align="right">単位：千円</Cell>
            <Blanks count={RIGHT_BLANKS} />

            <RowHead>2</RowHead>
            <Cell $bg={GREEN_BG} $black $cols={2} $rows={2}>
              <Diagonal viewBox="0 0 209 49" preserveAspectRatio="none">
                <path d="M6 1.400L209 49" stroke="#000" strokeWidth="1" />
              </Diagonal>
            </Cell>
            <Cell $bg={PEACH_BG} $black $cols={3} $align="center">第一四半期</Cell>
            <Cell $bg={PEACH_BG} $black $cols={3} $align="center">第二四半期</Cell>
            <Blanks count={RIGHT_BLANKS} />

            <RowHead>3</RowHead>
            {months.map((m) => (
              <Cell key={m} $bg={PEACH_BG} $black $align="center">{m}</Cell>
            ))}
            <Blanks count={RIGHT_BLANKS} />

            {customers.map((row) => (
              <React.Fragment key={row.r}>
                <RowHead>{row.r}</RowHead>
                {row.r === 4 && <Cell $bg={GREEN_BG} $black $rows={6} $align="center">関東エリア</Cell>}
                {row.r === 10 && <Cell $bg={GREEN_BG} $black $rows={6} $align="center">関西エリア</Cell>}
                <Cell $bg={GREEN_BG} $black>{row.name}</Cell>
                {row.v.map((n, i) => (
                  <Cell key={i} $black $align="right">{n}</Cell>
                ))}
                <Blanks count={RIGHT_BLANKS} />
              </React.Fragment>
            ))}

            {[16, 17, 18].map((r) => (
              <React.Fragment key={r}>
                <RowHead>{r}</RowHead>
                <Blanks count={columns.length} />
              </React.Fragment>
            ))}

            <RedFrame />
            <Selection />
            <StepBadge>1</StepBadge>
          </Grid>
        </GridClip>
        <VScroll>
          <ScrollBtn><Tri $dir="up" /></ScrollBtn>
          <VThumb />
          <VTrack />
          <ScrollBtn><Tri $dir="down" /></ScrollBtn>
        </VScroll>
      </SheetArea>

      <SheetBar>
        <TabNav>
          <Tri $dir="left" $color="#c4c4c4" />
          <Tri $dir="right" $color="#c4c4c4" />
        </TabNav>
        <SheetTab>Sheet1</SheetTab>
        <AddSheet />
        <HScrollWrap>
          <GripH><i /><i /><i /></GripH>
          <ScrollBtn><Tri $dir="left" $color="#555" /></ScrollBtn>
          <HThumb />
          <HTrack />
          <ScrollBtn><Tri $dir="right" $color="#555" /></ScrollBtn>
        </HScrollWrap>
      </SheetBar>

      <StatusBar>
        <span>準備完了</span>
        <StatusIcon>
          <Svg width="13" height="13" viewBox="0 0 13 13">
            <circle cx="3" cy="3" r="2.500" fill="#666" />
            <path d="M6 2h6.500v10.500H.5V7" fill="none" stroke="#666" />
            <path d="M3 8h8M3 10h8M7 5h5" stroke="#666" strokeDasharray="2 1" />
          </Svg>
        </StatusIcon>
        <ViewGroup>
          <ViewBtn $on>
            <Svg width="14" height="14" viewBox="0 0 14 14">
              <path d="M.5.500h13v13H.5zM4.800.5v13M9.200.5v13M.5 4.800h13M.5 9.200h13" fill="none" stroke="#777" />
            </Svg>
          </ViewBtn>
          <ViewBtn>
            <Svg width="14" height="14" viewBox="0 0 14 14">
              <path d="M.5.500h13v13H.5z" fill="none" stroke="#777" />
              <path d="M3.500 3.500h7v7h-7zM5 5.500h4M5 7.500h4M5 9.500h4" fill="none" stroke="#777" />
            </Svg>
          </ViewBtn>
          <ViewBtn>
            <Svg width="14" height="14" viewBox="0 0 14 14">
              <path d="M.5.500h13v13H.5zM.5 9.500h13M5 .5v5h5v-5" fill="none" stroke="#777" />
            </Svg>
          </ViewBtn>
          <ZoomBox>
            <ZoomSign />
            <ZoomTrack><ZoomThumb /></ZoomTrack>
            <ZoomPlus />
          </ZoomBox>
          <ZoomValue>100%</ZoomValue>
        </ViewGroup>
      </StatusBar>
    </Window>
  );
}
